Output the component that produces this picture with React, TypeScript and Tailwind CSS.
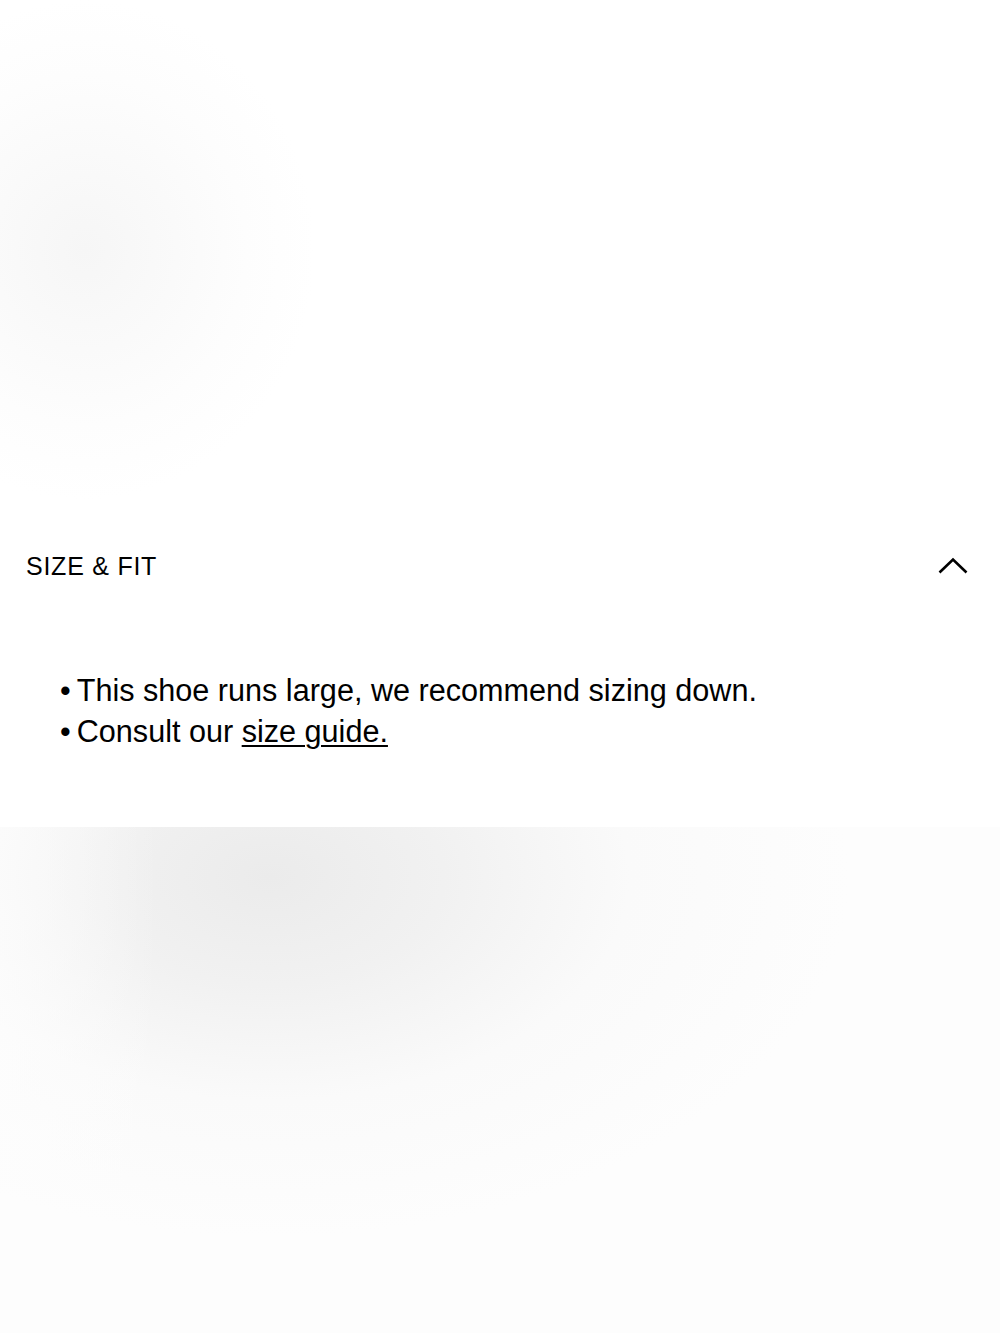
import { useState } from 'react'

const notes = ['This shoe runs large, we recommend sizing down.']

export default function App() {
  const [open, setOpen] = useState(true)

  return (
    <div className="min-h-[1333px] bg-white font-['Liberation_Sans',Arial,sans-serif] text-black">
      {/* product image area (faded) */}
      <div className="h-[510px] bg-[radial-gradient(ellipse_230px_250px_at_85px_250px,#f6f6f6,#fdfdfd_70%,#ffffff_100%),radial-gradient(ellipse_160px_220px_at_960px_250px,#f9f9f9,transparent_80%)] bg-[#fdfdfd]" />

      <section className="h-[317px] bg-white">
        <button
          onClick={() => setOpen(!open)}
          className="flex h-[112px] w-full items-center justify-between pl-[26px] pr-[32px] text-left"
        >
          <span className="text-[25px] leading-none tracking-[0.03em]">SIZE &amp; FIT</span>
          <svg width="30" height="18" viewBox="0 0 30 18" fill="none" className={open ? '' : 'rotate-180'}>
            <polyline points="1.5,15.5 15,2.5 28.5,15.5" stroke="#000" strokeWidth="2.6" />
          </svg>
        </button>

        {open && (
          <ul className="pl-[60px] pt-[48px] text-[30.6px] leading-[41px]">
            {notes.map((n) => (
              <li key={n}>
                <span className="mr-[6px]">•</span>
                {n}
              </li>
            ))}
            <li>
              <span className="mr-[6px]">•</span>
              Consult our{' '}
              <a href="#" className="underline decoration-2 underline-offset-[3px]">
                size guide.
              </a>
            </li>
          </ul>
        )}
      </section>

      {/* next product image (faded) */}
      <div className="h-[506px] bg-[linear-gradient(to_right,rgba(253,253,253,0.7),rgba(253,253,253,0)_160px),radial-gradient(ellipse_580px_360px_at_270px_50px,#ebebeb,#f1f1f1_30%,#fafafa_62%,#fdfdfd_100%)]" />
    </div>
  )
}
